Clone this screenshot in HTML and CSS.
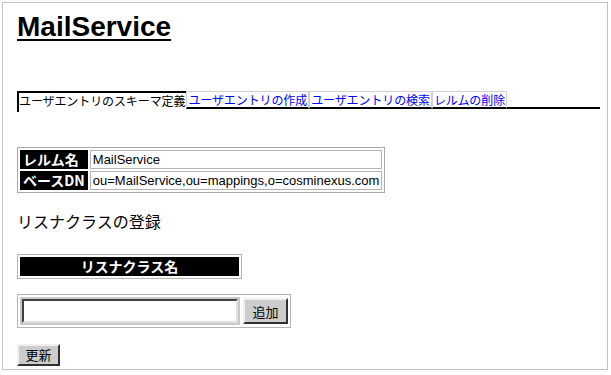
FILE: index.html
```html
<!DOCTYPE html>
<html lang="ja">
  <head>
    <meta charset="UTF-8" />
    <title>MailService</title>
    <link rel="stylesheet" href="styles.css">
  </head>
  <body>
    <div class="frame">
      <h1 class="title">MailService</h1>

      <!-- タブ -->
      <div class="tabs">
        <span class="tab current">ユーザエントリのスキーマ定義</span>
        <a class="tab" href="#">ユーザエントリの作成</a>
        <a class="tab" href="#">ユーザエントリの検索</a>
        <a class="tab" href="#">レルムの削除</a>
        <span class="tab-rest"></span>
      </div>

      <table class="info">
        <tr>
          <th>レルム名</th>
          <td>MailService</td>
        </tr>
        <tr>
          <th>ベースDN</th>
          <td>ou=MailService,ou=mappings,o=cosminexus.com</td>
        </tr>
      </table>

      <h2 class="section">リスナクラスの登録</h2>

      <table class="head-box">
        <tr><th>リスナクラス名</th></tr>
      </table>

      <table class="add-box">
        <tr>
          <td class="input-cell"><input type="text" class="text-in"></td>
          <td><button class="btn">追加</button></td>
        </tr>
      </table>

      <button class="btn update">更新</button>
    </div>
  </body>
</html>
```

FILE: styles.css
```css
body {
  margin: 0;
  background-color: #fff;
  font-family: "Liberation Sans", "Noto Sans CJK JP", sans-serif;
}
.frame {
  margin: 2px 3px 3px 2px;
  height: 368px;
  box-sizing: border-box;
  border: 1px solid #c4c4c4;
  padding: 0 7px 0 14px;
}
.title {
  margin: 8px 0 0 0;
  font-size: 28px;
  font-weight: bold;
  line-height: 32px;
  display: inline-block;
  text-decoration: underline;
  text-decoration-thickness: 2px;
  text-underline-offset: 3px;
}

/* tabs */
.tabs {
  display: flex;
  align-items: flex-start;
  margin-top: 48px;
  font-family: "Noto Sans CJK JP", sans-serif;
  font-size: 12px;
  line-height: 15px;
}
.tab {
  display: block;
  height: 15px;
  border: 1px solid #d0d0d0;
  border-bottom: 2px solid #000;
  color: #0000ff;
  text-decoration: none;
  padding: 0 1px;
  white-space: nowrap;
  letter-spacing: -0.1px;
}
.tab.current {
  color: #000;
  border: none;
  border-top: 2px solid #000;
  border-left: 2px solid #000;
  height: 19px;
  padding: 0 1px 0 0;
  letter-spacing: -0.1px;
}
.tab-rest {
  flex: 1;
  height: 16px;
  border-bottom: 2px solid #000;
}

/* realm info */
.info {
  margin-top: 35px;
  border: 1px solid #a8a8a8;
  border-spacing: 2px;
  width: 367px;
}
.info th {
  background-color: #000;
  color: #fff;
  font-family: "Noto Sans CJK JP", sans-serif;
  font-size: 14px;
  font-weight: bold;
  text-align: left;
  padding: 0 3px;
  height: 19px;
  line-height: 19px;
  white-space: nowrap;
  width: 59px;
}
.info td {
  border: 1px solid #b4b4b4;
  font-size: 13px;
  line-height: 15px;
  padding: 0 2px;
  white-space: nowrap;
}

.section {
  margin: 17px 0 0 0;
  font-family: "Noto Sans CJK JP", sans-serif;
  font-size: 16px;
  font-weight: normal;
  line-height: 22px;
}

.head-box {
  margin-top: 22px;
  border: 1px solid #b4b4b4;
  border-spacing: 2px;
  width: 225px;
}
.head-box th {
  background-color: #000;
  color: #fff;
  font-family: "Noto Sans CJK JP", sans-serif;
  font-size: 14px;
  font-weight: bold;
  height: 19px;
  line-height: 19px;
  padding: 0;
}

.add-box {
  margin-top: 15px;
  border: 1px solid #b4b4b4;
  border-spacing: 2px;
}
.add-box td {
  padding: 0;
}
.input-cell {
  border: 1px solid #c8c8c8;
  padding: 1px !important;
}
.text-in {
  display: block;
  width: 216px;
  height: 24px;
  box-sizing: border-box;
  border: 2px solid;
  border-color: #404040 #e0e0e0 #e0e0e0 #404040;
  outline: 1px solid #c8c8c8;
  margin: 0;
}
.btn {
  display: block;
  font-family: "Noto Sans CJK JP", sans-serif;
  font-size: 13px;
  background-color: #cccccc;
  border: 2px solid;
  border-color: #f0f0f0 #303030 #303030 #f0f0f0;
  padding: 0 5px;
  height: 26px;
  width: 45px;
  margin-left: 1px;
}
.update {
  margin: 16px 0 0 0;
  width: 43px;
  height: 22px;
  line-height: 16px;
}
```
